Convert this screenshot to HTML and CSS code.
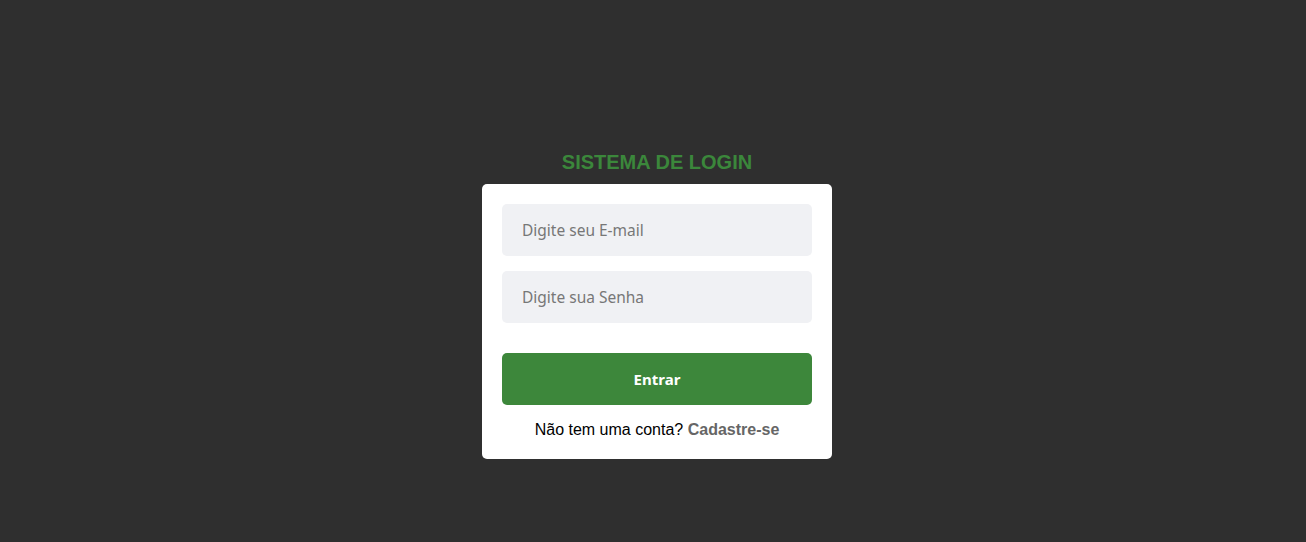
FILE: index.html
```html
<!DOCTYPE html>
<html lang="pt-BR">
<head>
<meta charset="utf-8">
<title>Sistema de Login</title>
<link rel="stylesheet" href="styles.css">
</head>
<body>
<main class="page">
  <h1 class="title">SISTEMA DE LOGIN</h1>
  <form class="card">
    <input class="field" type="email" placeholder="Digite seu E-mail">
    <input class="field" type="password" placeholder="Digite sua Senha">
    <button class="btn" type="button">Entrar</button>
    <p class="signup">Não tem uma conta? <a class="signup-link" href="#">Cadastre-se</a></p>
  </form>
</main>
</body>
</html>
```
FILE: styles.css
```css
* { box-sizing: border-box; }
html, body { margin: 0; height: 100%; }
body {
  background: #2f2f2f;
  font-family: "Liberation Sans", Arial, sans-serif;
}
.page {
  display: flex;
  flex-direction: column;
  align-items: center;
  padding-top: 151px;
  padding-left: 8px;
}
.title {
  margin: 0 0 10px;
  font-size: 20px;
  line-height: 23px;
  font-weight: bold;
  color: #3b873b;
}
.card {
  width: 350px;
  background: #fff;
  border-radius: 5px;
  padding: 20px 20px 19px;
  display: flex;
  flex-direction: column;
}
.field {
  height: 52px;
  border: none;
  border-radius: 5px;
  background: #f0f1f4;
  padding: 0 20px;
  font-family: "Noto Sans", sans-serif;
  font-size: 15.5px;
  color: #333;
  outline: none;
  margin-bottom: 15px;
}
.field::placeholder { color: #777; }
.field + .field { margin-bottom: 30px; }
.btn {
  height: 52px;
  border: none;
  border-radius: 5px;
  background: #3d873b;
  color: #fff;
  font-family: "Noto Sans", sans-serif;
  font-weight: bold;
  font-size: 15px;
  cursor: pointer;
}
.signup {
  margin: 15px 0 0;
  text-align: center;
  font-size: 16px;
  line-height: 20px;
  color: #000;
}
.signup-link {
  color: #666;
  font-weight: bold;
  text-decoration: none;
}
```
